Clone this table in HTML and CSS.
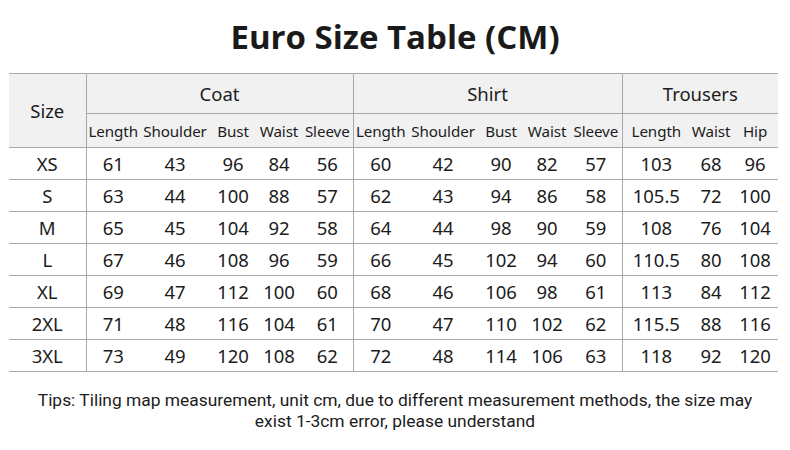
FILE: index.html
```html
<!DOCTYPE html>
<html>
<head>
<meta charset="utf-8">
<link rel="stylesheet" href="styles.css">
</head>
<body>
<h1 class="title">Euro Size Table (CM)</h1>
<table class="size-table">
  <colgroup>
    <col class="w77">
    <col class="w54"><col class="w70"><col class="w46"><col class="w46"><col class="w51">
    <col class="w55"><col class="w70"><col class="w46"><col class="w46"><col class="w52">
    <col class="w68"><col class="w42"><col class="w46">
  </colgroup>
  <thead>
    <tr class="group-row">
      <th rowspan="2" class="size-head sep">Size</th>
      <th colspan="5" class="group sep">Coat</th>
      <th colspan="5" class="group sep">Shirt</th>
      <th colspan="3" class="group">Trousers</th>
    </tr>
    <tr class="sub-row">
      <th>Length</th><th>Shoulder</th><th>Bust</th><th>Waist</th><th class="sep">Sleeve</th>
      <th>Length</th><th>Shoulder</th><th>Bust</th><th>Waist</th><th class="sep">Sleeve</th>
      <th>Length</th><th>Waist</th><th>Hip</th>
    </tr>
  </thead>
  <tbody>
    <tr><td class="sep">XS</td><td>61</td><td>43</td><td>96</td><td>84</td><td class="sep">56</td><td>60</td><td>42</td><td>90</td><td>82</td><td class="sep">57</td><td>103</td><td>68</td><td>96</td></tr>
    <tr><td class="sep">S</td><td>63</td><td>44</td><td>100</td><td>88</td><td class="sep">57</td><td>62</td><td>43</td><td>94</td><td>86</td><td class="sep">58</td><td>105.5</td><td>72</td><td>100</td></tr>
    <tr><td class="sep">M</td><td>65</td><td>45</td><td>104</td><td>92</td><td class="sep">58</td><td>64</td><td>44</td><td>98</td><td>90</td><td class="sep">59</td><td>108</td><td>76</td><td>104</td></tr>
    <tr><td class="sep">L</td><td>67</td><td>46</td><td>108</td><td>96</td><td class="sep">59</td><td>66</td><td>45</td><td>102</td><td>94</td><td class="sep">60</td><td>110.5</td><td>80</td><td>108</td></tr>
    <tr><td class="sep">XL</td><td>69</td><td>47</td><td>112</td><td>100</td><td class="sep">60</td><td>68</td><td>46</td><td>106</td><td>98</td><td class="sep">61</td><td>113</td><td>84</td><td>112</td></tr>
    <tr><td class="sep">2XL</td><td>71</td><td>48</td><td>116</td><td>104</td><td class="sep">61</td><td>70</td><td>47</td><td>110</td><td>102</td><td class="sep">62</td><td>115.5</td><td>88</td><td>116</td></tr>
    <tr><td class="sep">3XL</td><td>73</td><td>49</td><td>120</td><td>108</td><td class="sep">62</td><td>72</td><td>48</td><td>114</td><td>106</td><td class="sep">63</td><td>118</td><td>92</td><td>120</td></tr>
  </tbody>
</table>
<p class="tips">Tips: Tiling map measurement, unit cm, due to different measurement methods, the size may<br>exist 1-3cm error, please understand</p>
</body>
</html>
```
FILE: styles.css
```css
html, body {
  margin: 0;
  padding: 0;
  background: #ffffff;
}
body {
  width: 790px;
  height: 450px;
  overflow: hidden;
  font-family: "Noto Sans", "Open Sans", sans-serif;
  color: #1c1c1c;
}
.title {
  margin: 0;
  padding-top: 17px;
  height: 73px;
  box-sizing: border-box;
  text-align: center;
  font-family: "Open Sans", "Noto Sans", sans-serif;
  font-weight: 700;
  font-size: 33px;
  line-height: 40px;
  color: #1a1a1a;
}
.size-table {
  margin-left: 9px;
  width: 769px;
  table-layout: fixed;
  border-collapse: collapse;
  border-top: 1px solid #a8a8a8;
}
.w77 { width: 77px; }
.w54 { width: 54px; }
.w70 { width: 70px; }
.w46 { width: 46px; }
.w51 { width: 51px; }
.w55 { width: 55px; }
.w52 { width: 52px; }
.w68 { width: 68px; }
.w42 { width: 42px; }
.size-table th,
.size-table td {
  padding: 0;
  text-align: center;
  white-space: nowrap;
  font-weight: 400;
  border-bottom: 1px solid #a8a8a8;
}
.size-table .sep {
  border-right: 1px solid #a8a8a8;
}
.size-table thead th {
  background: #f1f1f1;
}
.group-row th {
  height: 39px;
  font-size: 18.5px;
}
.size-head {
  font-size: 19px;
}
.sub-row th {
  height: 33px;
  font-size: 15.2px;
  letter-spacing: -0.1px;
}
.size-table td {
  height: 31px;
  font-size: 18.5px;
}
.tips {
  margin: 18px 0 0 0;
  text-align: center;
  font-family: "Roboto", "Noto Sans", sans-serif;
  font-size: 17.4px;
  line-height: 21px;
  color: #1c1c1c;
}
```
